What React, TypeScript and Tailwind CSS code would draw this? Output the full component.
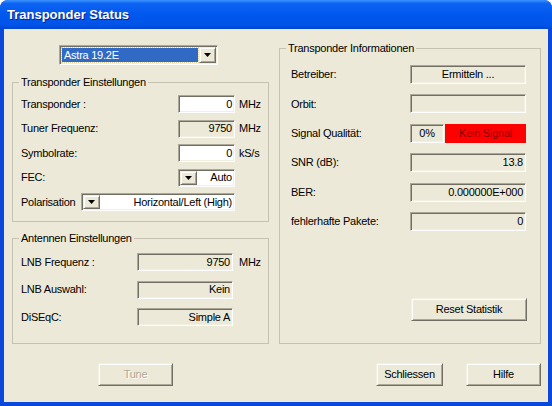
const sunken =
  "border border-t-[#ACA899] border-l-[#ACA899] border-r-white border-b-white shadow-[inset_1px_1px_0_#716F64,inset_-1px_-1px_0_#F1EFE2]";
const raised =
  "border border-t-[#F1EFE2] border-l-[#F1EFE2] border-r-[#716F64] border-b-[#716F64] shadow-[inset_1px_1px_0_white,inset_-1px_-1px_0_#ACA899]";

const Arrow = () => (
  <div className={`${raised} bg-[#ECE9D8] flex items-center justify-center w-[17px] h-full shrink-0`}>
    <svg width="7" height="4" viewBox="0 0 7 4">
      <polygon points="0,0 7,0 3.5,4" fill="black" />
    </svg>
  </div>
);

type FieldProps = {
  w: string;
  h?: string;
  white?: boolean;
  center?: boolean;
  children?: React.ReactNode;
};

const Field = ({ w, h = "h-[18px]", white, center, children }: FieldProps) => (
  <div
    className={`${sunken} ${w} ${h} ${white ? "bg-white" : "bg-[#ECE9D8]"} flex items-center ${
      center ? "justify-center" : "justify-end pr-[2px]"
    } shrink-0`}
  >
    {children}
  </div>
);

const Button = ({ w, disabled, children }: { w: string; disabled?: boolean; children: React.ReactNode }) => (
  <div
    className={`${raised} ${w} h-[23px] bg-[#ECE9D8] flex items-center justify-center ${
      disabled ? "text-[#ACA899] [text-shadow:1px_1px_0_white]" : ""
    }`}
  >
    {children}
  </div>
);

// fieldset keeps no side padding so the legend sits at the same place for every group
const Group = ({ title, className, children }: { title: string; className: string; children: React.ReactNode }) => (
  <fieldset className={`border border-[#C5C2B2] ${className}`}>
    <legend className="ml-[6px] px-[2px] leading-[13px]">{title}</legend>
    {children}
  </fieldset>
);

export default function App() {
  return (
    <div className="w-[552px] h-[406px] bg-[#0A47DC] rounded-t-[8px] flex flex-col overflow-hidden font-['Liberation_Sans',Arial,sans-serif] text-[11px] tracking-[-0.25px] text-black">
      <div className="h-[29px] shrink-0 flex items-center pl-[7px] bg-[linear-gradient(#3C95FF_0%,#0E63F2_12%,#0058EE_50%,#0054E8_85%,#0046D4_100%)]">
        <span className="text-white font-bold text-[13px] tracking-normal [text-shadow:1px_1px_0_#0A1E8C]">
          Transponder Status
        </span>
      </div>
      <div className="flex-1 mx-[4px] mb-[4px] bg-[#ECE9D8] flex flex-col">
        <div className="flex pl-[8px] gap-[10px]">
          <div className="w-[257px] flex flex-col">
            <div className={`${sunken} bg-white mt-[16px] ml-[47px] w-[159px] h-[20px] flex items-stretch p-[1px]`}>
              <div className="flex-1 flex items-center m-[1px] bg-[#316AC5] text-white pl-[2px] outline-1 outline-dotted outline-[#D6CF9C]">
                Astra 19.2E
              </div>
              <Arrow />
            </div>

            <Group title="Transponder Einstellungen" className="mt-[11px] pt-[6px] pb-[10px]">
              <div className="flex flex-col gap-[6.5px] pl-[8px]">
                <div className="flex items-center">
                  <span className="w-[157px]">Transponder :</span>
                  <Field w="w-[57px]" white>0</Field>
                  <span className="ml-[4px]">MHz</span>
                </div>
                <div className="flex items-center">
                  <span className="w-[157px]">Tuner Frequenz:</span>
                  <Field w="w-[57px]">9750</Field>
                  <span className="ml-[4px]">MHz</span>
                </div>
                <div className="flex items-center">
                  <span className="w-[157px]">Symbolrate:</span>
                  <Field w="w-[57px]" white>0</Field>
                  <span className="ml-[4px]">kS/s</span>
                </div>
                <div className="flex items-center">
                  <span className="w-[157px]">FEC:</span>
                  <div className={`${sunken} bg-white w-[57px] h-[18px] flex items-stretch p-[1px]`}>
                    <Arrow />
                    <span className="flex-1 flex items-center justify-end pr-[1px]">Auto</span>
                  </div>
                </div>
                <div className="flex items-center">
                  <span className="w-[60px]">Polarisation</span>
                  <div className={`${sunken} bg-white w-[154px] h-[18px] flex items-stretch p-[1px]`}>
                    <Arrow />
                    <span className="flex-1 flex items-center justify-end pr-[1px]">Horizontal/Left (High)</span>
                  </div>
                </div>
              </div>
            </Group>

            <Group title="Antennen Einstellungen" className="mt-[10px] pt-[8px] pb-[17px]">
              <div className="flex flex-col gap-[9.5px] pl-[8px]">
                <div className="flex items-center">
                  <span className="w-[116px]">LNB Frequenz :</span>
                  <Field w="w-[96px]">9750</Field>
                  <span className="ml-[6px]">MHz</span>
                </div>
                <div className="flex items-center">
                  <span className="w-[116px]">LNB Auswahl:</span>
                  <Field w="w-[96px]">Kein</Field>
                </div>
                <div className="flex items-center">
                  <span className="w-[116px]">DiSEqC:</span>
                  <Field w="w-[96px]">Simple A</Field>
                </div>
              </div>
            </Group>
          </div>

          <div className="w-[262px] flex flex-col">
            <Group title="Transponder Informationen" className="mt-[13px] pt-[10px] pb-[22px]">
              <div className="flex flex-col gap-[10.4px] pl-[11px]">
                <div className="flex items-center">
                  <span className="w-[119px]">Betreiber:</span>
                  <Field w="w-[116px]" h="h-[19px]" center>Ermitteln ...</Field>
                </div>
                <div className="flex items-center">
                  <span className="w-[119px]">Orbit:</span>
                  <Field w="w-[116px]" h="h-[19px]" />
                </div>
                <div className="flex items-center">
                  <span className="w-[119px]">Signal Qualität:</span>
                  <Field w="w-[34px]" h="h-[19px]" center>0%</Field>
                  <div className="ml-[1px] w-[81px] h-[19px] bg-[#FF0000] text-[#800000] flex items-center justify-center">
                    Kein Signal
                  </div>
                </div>
                <div className="flex items-center">
                  <span className="w-[119px]">SNR (dB):</span>
                  <Field w="w-[116px]" h="h-[19px]">13.8</Field>
                </div>
                <div className="flex items-center">
                  <span className="w-[119px]">BER:</span>
                  <Field w="w-[116px]" h="h-[19px]">0.000000E+000</Field>
                </div>
                <div className="flex items-center">
                  <span className="w-[119px]">fehlerhafte Pakete:</span>
                  <Field w="w-[116px]" h="h-[19px]">0</Field>
                </div>
              </div>
              <div className="flex mt-[67px] ml-[131px]">
                <Button w="w-[116px]">Reset Statistik</Button>
              </div>
            </Group>
          </div>
        </div>

        <div className="flex mt-[19px] pl-[94px]">
          <Button w="w-[75px]" disabled>
            Tune
          </Button>
          <div className="ml-[203px]">
            <Button w="w-[67px]">Schliessen</Button>
          </div>
          <div className="ml-[23px]">
            <Button w="w-[75px]">Hilfe</Button>
          </div>
        </div>
      </div>
    </div>
  );
}
